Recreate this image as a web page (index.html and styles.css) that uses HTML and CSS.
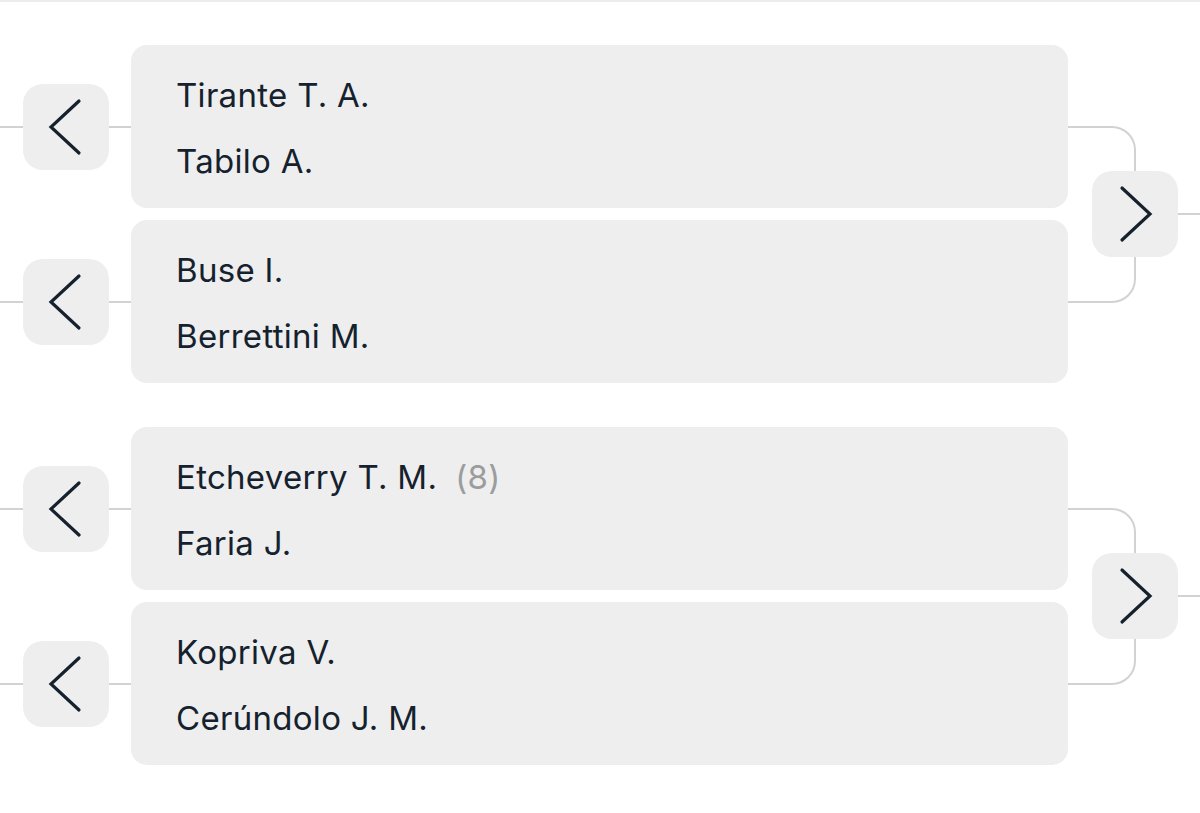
FILE: index.html
```html
<!DOCTYPE html>
<html lang="en">
<head>
<meta charset="utf-8">
<title>Bracket</title>
<link rel="stylesheet" href="styles.css">
</head>
<body>
<div class="topbar"></div>
<main class="bracket">
  <section class="group">
    <div class="prev">
      <span class="line"></span>
      <button class="nav"><svg viewBox="0 0 86 86" width="86" height="86"><polyline points="56,17 28,43 56,69"/></svg></button>
      <span class="line"></span>
    </div>
    <div class="card">
      <div class="player">Tirante T. A.</div>
      <div class="player">Tabilo A.</div>
    </div>
    <div class="prev">
      <span class="line"></span>
      <button class="nav"><svg viewBox="0 0 86 86" width="86" height="86"><polyline points="56,17 28,43 56,69"/></svg></button>
      <span class="line"></span>
    </div>
    <div class="card">
      <div class="player">Buse I.</div>
      <div class="player">Berrettini M.</div>
    </div>
    <div class="join">
      <div class="bracket-line"></div>
      <div class="next">
        <button class="nav"><svg viewBox="0 0 86 86" width="86" height="86"><polyline points="30,17 58,43 30,69"/></svg></button>
        <span class="line"></span>
      </div>
    </div>
  </section>

  <section class="group">
    <div class="prev">
      <span class="line"></span>
      <button class="nav"><svg viewBox="0 0 86 86" width="86" height="86"><polyline points="56,17 28,43 56,69"/></svg></button>
      <span class="line"></span>
    </div>
    <div class="card">
      <div class="player">Etcheverry T. M.<span class="seed">(8)</span></div>
      <div class="player">Faria J.</div>
    </div>
    <div class="prev">
      <span class="line"></span>
      <button class="nav"><svg viewBox="0 0 86 86" width="86" height="86"><polyline points="56,17 28,43 56,69"/></svg></button>
      <span class="line"></span>
    </div>
    <div class="card">
      <div class="player">Kopriva V.</div>
      <div class="player">Cerúndolo J. M.</div>
    </div>
    <div class="join">
      <div class="bracket-line"></div>
      <div class="next">
        <button class="nav"><svg viewBox="0 0 86 86" width="86" height="86"><polyline points="30,17 58,43 30,69"/></svg></button>
        <span class="line"></span>
      </div>
    </div>
  </section>
</main>
</body>
</html>
```
FILE: styles.css
```css
html, body {
  margin: 0;
  padding: 0;
  background: #ffffff;
}
body {
  font-family: Inter, "Noto Sans", "Liberation Sans", sans-serif;
  color: #15222e;
  width: 1200px;
  height: 813px;
  overflow: hidden;
}
.topbar {
  height: 2px;
  background: #ececec;
}
.bracket {
  padding-top: 43px;
  display: flex;
  flex-direction: column;
  gap: 44px;
}
.group {
  display: grid;
  grid-template-columns: 131px 937px 1fr;
  grid-template-rows: 163px 163px;
  row-gap: 12px;
}
.prev {
  display: flex;
  align-items: center;
}
.line {
  flex: 1;
  height: 2px;
  background: #d2d2d2;
}
.nav {
  width: 86px;
  height: 86px;
  padding: 0;
  border: none;
  border-radius: 20px;
  background: #eeeeee;
  display: flex;
  align-items: center;
  justify-content: center;
  flex: none;
}
.nav svg {
  display: block;
}
.nav polyline {
  fill: none;
  stroke: #15222e;
  stroke-width: 3.2;
  stroke-linecap: round;
  stroke-linejoin: miter;
}
.card {
  grid-column: 2;
  background: #eeeeee;
  border-radius: 16px;
  padding-left: 45px;
  padding-top: 3px;
  display: flex;
  flex-direction: column;
  justify-content: center;
}
.player {
  font-size: 33px;
  line-height: 66px;
  letter-spacing: 0.3px;
}
.seed {
  color: #9c9c9c;
  margin-left: 18px;
}
.join {
  grid-column: 3;
  grid-row: 1 / span 2;
  display: grid;
  align-items: center;
}
.bracket-line {
  grid-area: 1 / 1;
  justify-self: start;
  box-sizing: border-box;
  width: 68px;
  height: 177px;
  border: 2px solid #d2d2d2;
  border-left: none;
  border-radius: 0 24px 24px 0;
}
.next {
  grid-area: 1 / 1;
  display: flex;
  align-items: center;
  margin-left: 24px;
}
```
